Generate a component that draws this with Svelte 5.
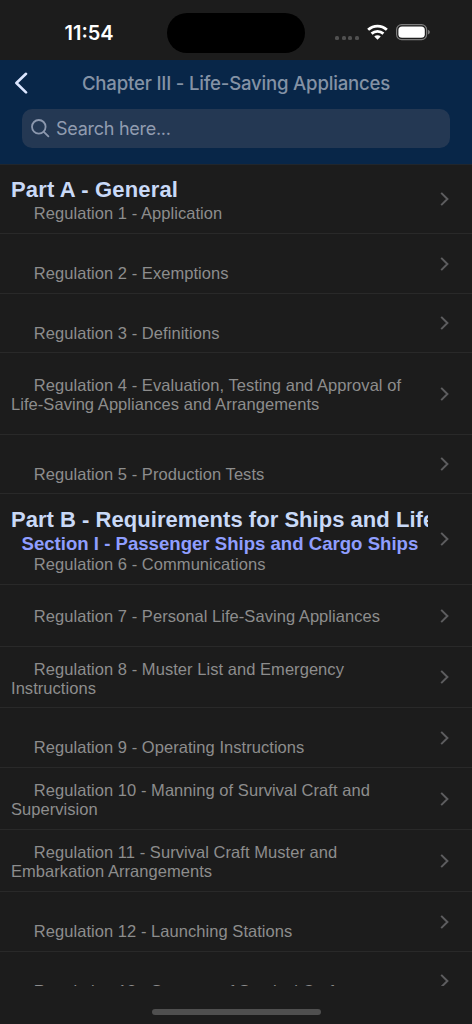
<script lang="ts">
  type Row = {
    text: string;
    height: number;
    gap: number;
    part?: string;
    section?: string;
  };

  // gap is the space left under the last line of the row
  const rows: Row[] = [
    { part: 'Part A - General', text: 'Regulation 1 - Application', height: 69, gap: 10 },
    { text: 'Regulation 2 - Exemptions', height: 60, gap: 10 },
    { text: 'Regulation 3 - Definitions', height: 59, gap: 9 },
    { text: 'Regulation 4 - Evaluation, Testing and Approval of Life-Saving Appliances and Arrangements', height: 82, gap: 20 },
    { text: 'Regulation 5 - Production Tests', height: 59, gap: 9 },
    {
      part: 'Part B - Requirements for Ships and Life-Saving Appliances',
      section: 'Section I - Passenger Ships and Cargo Ships',
      text: 'Regulation 6 - Communications',
      height: 91,
      gap: 10
    },
    { text: 'Regulation 7 - Personal Life-Saving Appliances', height: 62, gap: 20 },
    { text: 'Regulation 8 - Muster List and Emergency Instructions', height: 61, gap: 9 },
    { text: 'Regulation 9 - Operating Instructions', height: 60, gap: 10 },
    { text: 'Regulation 10 - Manning of Survival Craft and Supervision', height: 62, gap: 10 },
    { text: 'Regulation 11 - Survival Craft Muster and Embarkation Arrangements', height: 62, gap: 10 },
    { text: 'Regulation 12 - Launching Stations', height: 60, gap: 10 },
    { text: 'Regulation 13 - Stowage of Survival Craft', height: 59, gap: 9 }
  ];

  let search = $state('');
</script>

<div class="screen">
  <div class="status">
    <div class="time">11:54</div>
    <div class="island"></div>
    <div class="indicators">
      <div class="signal">
        <span></span><span></span><span></span><span></span>
      </div>
      <svg class="wifi" width="21" height="16" viewBox="0 0 22 16" fill="none" stroke="#fff" stroke-width="2.9">
        <path d="M1.2 5.7C6.8 .4 15.2 .4 20.8 5.7" />
        <path d="M4.8 9.7C8.4 6.4 13.6 6.4 17.2 9.7" />
        <path d="M11 16L7.6 12.6C9.5 11 12.5 11 14.4 12.6Z" fill="#fff" stroke="none" />
      </svg>
      <svg class="battery" width="35" height="17" viewBox="0 0 35 17">
        <rect x="0.6" y="0.6" width="30" height="15" rx="5" fill="none" stroke="#7c7c7c" stroke-width="1.2" />
        <rect x="2.4" y="2.4" width="26.4" height="11.4" rx="3.6" fill="#fff" />
        <path d="M31.9 5.8C34.5 6.6 34.5 9.6 31.9 10.4Z" fill="#7c7c7c" />
      </svg>
    </div>
  </div>

  <header>
    <div class="title-bar">
      <button class="back" aria-label="Back">
        <svg width="14" height="22" viewBox="0 0 14 22" fill="none" stroke="#dbe6ff" stroke-width="2.6" stroke-linecap="round" stroke-linejoin="round">
          <path d="M12 1.8L2.4 11L12 20.4" />
        </svg>
      </button>
      <h1>Chapter III - Life-Saving Appliances</h1>
    </div>
    <label class="search">
      <svg width="19" height="19" viewBox="0 0 19 19" fill="none" stroke="#8c98ae" stroke-width="1.8" stroke-linecap="round">
        <circle cx="7.8" cy="7.8" r="6.8" />
        <path d="M12.8 12.8L17.4 17.4" />
      </svg>
      <input type="text" placeholder="Search here..." bind:value={search} />
    </label>
  </header>

  <main>
    {#each rows as row}
      <div class="row" style="height: {row.height}px">
        <div class="body" style="padding-bottom: {row.gap}px">
          {#if row.part}
            <h2 class:spaced={!row.section}>{row.part}</h2>
          {/if}
          {#if row.section}
            <h3>{row.section}</h3>
          {/if}
          <p>{row.text}</p>
        </div>
        <svg class="chevron" width="9" height="14" viewBox="0 0 9 14" fill="none" stroke="#5d5d5f" stroke-width="2">
          <path d="M1.2 .9L7.4 7L1.2 13.1" />
        </svg>
      </div>
    {/each}
  </main>

  <footer>
    <div class="home"></div>
  </footer>
</div>

<style>
  :global(body) {
    margin: 0;
    background: #1c1c1c;
  }

  .screen {
    width: 472px;
    height: 1024px;
    display: flex;
    flex-direction: column;
    overflow: hidden;
    background: #1c1c1c;
    font-family: "Liberation Sans", Arial, sans-serif;
  }

  .status {
    height: 59.5px;
    flex: none;
    display: grid;
    grid-template-columns: 167px 138px 167px;
    align-items: start;
    box-sizing: border-box;
    padding-top: 12.5px;
  }

  .time {
    padding: 8px 0 0 64.5px;
    color: #fff;
    font: 600 20px/24px Inter, sans-serif;
  }

  .island {
    height: 40.5px;
    border-radius: 21px;
    background: #000;
  }

  .indicators {
    display: flex;
    align-items: flex-start;
    padding: 11.5px 0 0 30px;
  }

  .signal {
    display: flex;
    gap: 2.7px;
    padding-top: 11.5px;
    margin-right: 8px;
  }

  .signal span {
    width: 4px;
    height: 4px;
    border-radius: 1.5px;
    background: #505050;
  }

  .wifi {
    margin-right: 8px;
  }

  header {
    height: 105.5px;
    flex: none;
    box-sizing: border-box;
    border-bottom: 1px solid #20262d;
    background: #082648;
  }

  .title-bar {
    height: 49px;
    display: grid;
    grid-template-columns: 60px 1fr 60px;
    align-items: center;
  }

  .back {
    display: flex;
    padding: 0 0 2px 14px;
    border: none;
    background: none;
  }

  h1 {
    margin: 0;
    padding-bottom: 2px;
    color: #8492a5;
    font: 500 18.6px/24px Inter, sans-serif;
    letter-spacing: -0.2px;
    text-align: center;
    white-space: nowrap;
  }

  .search {
    height: 39.5px;
    box-sizing: border-box;
    margin: 0 22px;
    padding-left: 9px;
    display: flex;
    align-items: center;
    gap: 6px;
    border-radius: 10px;
    background: #243853;
  }

  .search input {
    flex: 1;
    padding: 2px 0 0;
    border: none;
    outline: none;
    background: none;
    color: #dbe6ff;
    font: 400 18px/24px Inter, sans-serif;
    letter-spacing: -0.27px;
  }

  .search input::placeholder {
    color: #919cb0;
    opacity: 1;
  }

  main {
    height: 821px;
    flex: none;
    overflow: hidden;
  }

  .row {
    box-sizing: border-box;
    display: flex;
    align-items: center;
    border-bottom: 1px solid #292929;
  }

  .body {
    width: 428px;
    height: 100%;
    flex: none;
    box-sizing: border-box;
    padding-left: 11px;
    display: flex;
    flex-direction: column;
    justify-content: flex-end;
    overflow: hidden;
  }

  h2,
  h3,
  p {
    margin: 0;
  }

  h2 {
    color: #c9d9f7;
    font-size: 22px;
    line-height: 26px;
    letter-spacing: 0.03px;
    white-space: nowrap;
  }

  h2.spaced {
    padding-bottom: 1px;
    letter-spacing: 0.15px;
  }

  h3 {
    padding-left: 10.5px;
    color: #8f9eff;
    font-size: 18.6px;
    line-height: 22px;
    white-space: nowrap;
  }

  p {
    color: #8d8d8d;
    font-size: 16.5px;
    line-height: 19px;
    letter-spacing: 0.05px;
    text-indent: 22.8px;
  }

  .chevron {
    margin-left: 12px;
  }

  footer {
    flex: 1;
    display: flex;
    justify-content: center;
    align-items: flex-start;
    padding-top: 23px;
  }

  .home {
    width: 169px;
    height: 6px;
    border-radius: 3px;
    background: #4f4f4f;
  }
</style>
